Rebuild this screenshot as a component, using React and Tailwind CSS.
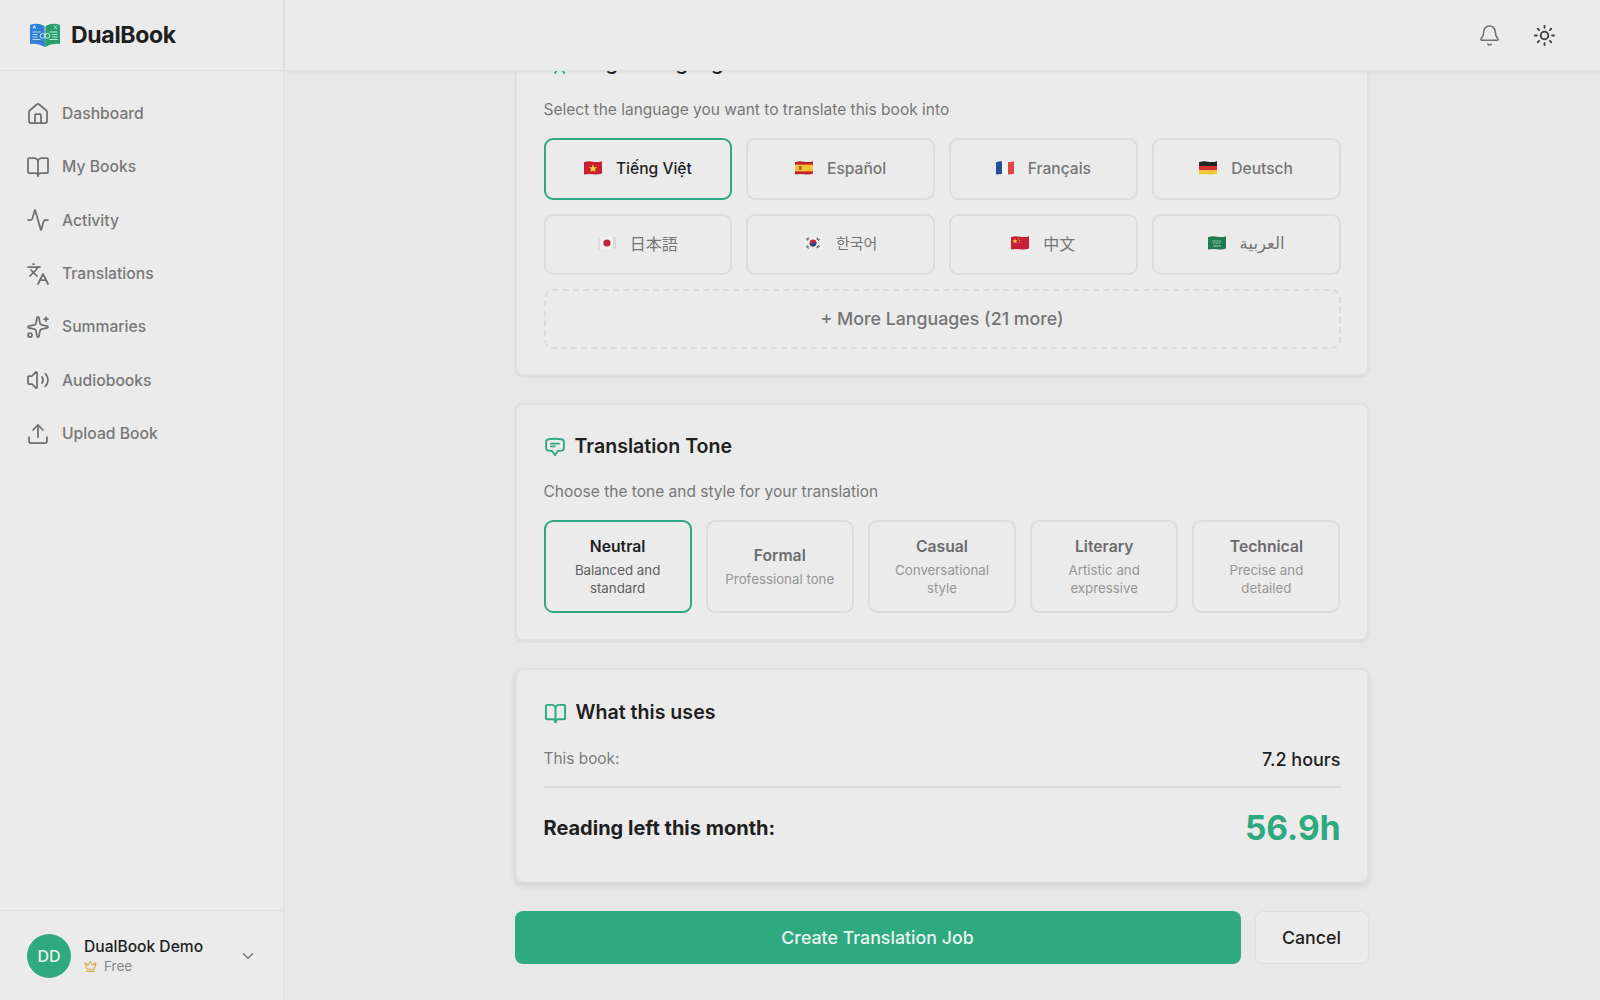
import React from "react";
import { House, BookOpen, Activity, Languages, Sparkles, Volume2, Upload, Bell, Sun, Crown, ChevronDown } from "lucide-react";
import { HiOutlineChatBubbleBottomCenterText } from "react-icons/hi2";

const Logo = () => (
  <svg width="32" height="26" viewBox="0 0 32 26" aria-hidden="true">
    <path d="M1 3 Q8 0 15.5 4 L16 25 Q8 20.5 1 22 Z" fill="#2f7fd4" />
    <path d="M31 3 Q24 0 16.5 4 L16 25 Q24 20.5 31 22 Z" fill="#27a06c" />
    <path d="M4 6.6 L5.3 3.4 L6.6 6.6 M4.6 5.5h1.4" fill="none" stroke="#fff" strokeWidth=".8" />
    <path d="M25 3.5 L28 7 M28 3.5 L25 7" fill="none" stroke="#d8f3e6" strokeWidth=".8" />
    <path d="M3.5 10h8M3.5 12.5h5M3.5 15h5M3.5 17.5h8" stroke="#bcd9f4" strokeWidth="1" />
    <path d="M20.5 10h8M23.5 12.5h5M23.5 15h5M20.5 17.5h8" stroke="#bdebd5" strokeWidth="1" />
    <circle cx="13.5" cy="13.8" r="2.4" fill="none" stroke="#dff0f7" strokeWidth=".9" />
    <circle cx="18.5" cy="13.8" r="2.4" fill="none" stroke="#dff7ea" strokeWidth=".9" />
  </svg>
);

const Flag = ({ id, children }) => (
  <svg width="18" height="14" viewBox="0 0 18 14" aria-hidden="true" className="mb-[2px] shrink-0">
    <defs>
      <clipPath id={id}>
        <path d="M0 1.2 Q4.5 -.2 9 .7 T18 .2 V12.6 Q13.5 14 9 13.2 T0 13.6 Z" />
      </clipPath>
    </defs>
    <g clipPath={`url(#${id})`}>{children}</g>
  </svg>
);

const flags = {
  vn: (
    <Flag id="vn">
      <rect width="18" height="14" fill="#c8202f" />
      <path d="M9 3.2 L10.1 6.2 L13.2 6.3 L10.8 8.2 L11.6 11 L9 9.4 L6.4 11 L7.2 8.2 L4.8 6.3 L7.9 6.2 Z" fill="#f7d33d" />
    </Flag>
  ),
  es: (
    <Flag id="es">
      <rect width="18" height="14" fill="#c4202c" />
      <rect y="3.6" width="18" height="6.8" fill="#f3c42f" />
      <rect x="4" y="5" width="2.6" height="3.8" fill="#b5552a" />
    </Flag>
  ),
  fr: (
    <Flag id="fr">
      <rect width="6" height="14" fill="#24509a" />
      <rect x="6" width="6" height="14" fill="#f4f4f4" />
      <rect x="12" width="6" height="14" fill="#de4a41" />
    </Flag>
  ),
  de: (
    <Flag id="de">
      <rect width="18" height="5" fill="#242424" />
      <rect y="5" width="18" height="4.4" fill="#d5302b" />
      <rect y="9.4" width="18" height="5" fill="#f5c92e" />
    </Flag>
  ),
  jp: (
    <Flag id="jp">
      <rect width="18" height="14" fill="#f1f1f1" />
      <rect x="15" width="3" height="14" fill="#d8d8d8" />
      <rect width="2" height="14" fill="#dcdcdc" />
      <circle cx="9" cy="7" r="3.6" fill="#c4203f" />
    </Flag>
  ),
  kr: (
    <Flag id="kr">
      <rect width="18" height="14" fill="#efefef" />
      <circle cx="9" cy="7" r="3.4" fill="#c8283c" />
      <path d="M5.6 7 A3.4 3.4 0 0 0 12.4 7 Q10.5 5.6 9 7 T5.6 7Z" fill="#25468f" />
      <path d="M2 3.5 L4.5 1.5 M2.8 4.5 L5.3 2.5 M13 1.8 L15.8 3.8 M12.4 2.8 L15.2 4.8 M2 10.5 L4.5 12.5 M2.8 9.5 L5.3 11.5 M13 12.2 L15.8 10.2 M12.4 11.2 L15.2 9.2" stroke="#2a2a2a" strokeWidth=".8" />
    </Flag>
  ),
  cn: (
    <Flag id="cn">
      <rect width="18" height="14" fill="#c9203a" />
      <path d="M4 2.4 L4.7 4.2 L6.6 4.3 L5.1 5.5 L5.6 7.3 L4 6.3 L2.4 7.3 L2.9 5.5 L1.4 4.3 L3.3 4.2 Z" fill="#f7d33d" />
      <circle cx="7.6" cy="2.8" r=".5" fill="#f7d33d" />
      <circle cx="8.6" cy="4.6" r=".5" fill="#f7d33d" />
      <circle cx="8.4" cy="6.6" r=".5" fill="#f7d33d" />
    </Flag>
  ),
  sa: (
    <Flag id="sa">
      <rect width="18" height="14" fill="#1f7a52" />
      <path d="M4.5 5h9M5 7h8" stroke="#cfe8da" strokeWidth=".9" strokeDasharray="1 .5" />
      <path d="M5 10h8" stroke="#e4f1ea" strokeWidth=".7" />
    </Flag>
  ),
};

const nav = [
  [House, "Dashboard"],
  [BookOpen, "My Books"],
  [Activity, "Activity"],
  [Languages, "Translations"],
  [Sparkles, "Summaries"],
  [Volume2, "Audiobooks"],
  [Upload, "Upload Book"],
];

const langs = [
  ["vn", "Tiếng Việt", ""],
  ["es", "Español", ""],
  ["fr", "Français", ""],
  ["de", "Deutsch", ""],
  ["jp", "日本語", "font-['Inter','Noto_Sans_CJK_JP',sans-serif] font-normal text-[16px]"],
  ["kr", "한국어", "font-['Inter','Noto_Sans_CJK_KR',sans-serif] font-normal text-[15px]"],
  ["cn", "中文", "font-['Inter','Noto_Sans_CJK_SC',sans-serif] font-normal text-[16px]"],
  ["sa", "العربية", "font-['DejaVu_Sans',sans-serif] font-normal text-[16.5px]"],
];

const tones = [
  ["Neutral", "Balanced and standard"],
  ["Formal", "Professional tone"],
  ["Casual", "Conversational style"],
  ["Literary", "Artistic and expressive"],
  ["Technical", "Precise and detailed"],
];

export default function App() {
  return (
    <div className="flex h-screen w-full overflow-hidden bg-[#e8e8e8] font-['Inter','Noto_Sans_CJK_SC','DejaVu_Sans',sans-serif] text-[#1f1f1f]">
      <aside className="flex w-[285px] shrink-0 flex-col border-r-2 border-[#e2e2e2] bg-[#ebebeb]">
        <div className="flex h-[71px] items-center gap-[10px] border-b border-[#dcdcdc] pl-[29px]">
          <Logo />
          <span className="text-[23px] font-bold tracking-[-0.3px] text-[#1f1f1f]">DualBook</span>
        </div>
        <nav className="flex flex-1 flex-col pt-[16px]">
          {nav.map(([Icon, label]) => (
            <div key={label} className="flex h-[53.33px] items-center gap-[12px] pl-[26px] text-[15.7px] font-medium text-[#787878]">
              <Icon size={24} strokeWidth={1.75} className="text-[#6f6f6f]" />
              <span>{label}</span>
            </div>
          ))}
        </nav>
        <div className="flex h-[90px] items-center border-t border-[#dcdcdc] pl-[27px] pr-[26px]">
          <div className="flex h-[44px] w-[44px] items-center justify-center rounded-full bg-[#2fa97f] text-[16px] font-medium text-[#e8f3ee]">DD</div>
          <div className="ml-[13px] flex-1 pt-[2px]">
            <div className="text-[15.6px] leading-[20px] font-medium text-[#1f1f1f]">DualBook Demo</div>
            <div className="flex items-center gap-[7px] text-[13.5px] leading-[19px] text-[#858585]">
              <Crown size={13} className="text-[#dca548]" />
              <span>Free</span>
            </div>
          </div>
          <ChevronDown size={18} strokeWidth={1.75} className="text-[#6f6f6f]" />
        </div>
      </aside>

      <main className="flex min-w-0 flex-1 flex-col">
        <header className="relative z-10 flex h-[71px] shrink-0 items-center justify-end gap-[32px] border-b border-[#dfdfdf] bg-[#ebebeb] pr-[44px] shadow-[0_1px_3px_rgba(0,0,0,0.06)]">
          <Bell size={23} strokeWidth={1.6} className="text-[#6f6f6f]" />
          <Sun size={23} strokeWidth={1.9} className="text-[#3d3d3d]" />
        </header>

        <div className="flex min-h-0 flex-1 flex-col items-center justify-end overflow-hidden pb-[36px] pr-[2px]">
          <div className="flex w-[854px] shrink-0 flex-col gap-[27px]">
            <section className="rounded-[8px] border-2 border-[#e0e0e0] bg-[#ebebeb] pl-[27px] pr-[26px] pb-[25px] pt-[26px] shadow-[0_1px_3px_rgba(0,0,0,0.08)]">
              <div className="mb-[20px] flex h-[28px] items-center gap-[10px]">
                <Languages size={22} strokeWidth={2} className="text-[#2fa97f]" />
                <h2 className="text-[19.6px] font-semibold text-[#1f1f1f]">Target Language</h2>
              </div>
              <p className="mb-[16px] text-[15.5px] leading-[24px] text-[#777777]">Select the language you want to translate this book into</p>
              <div className="grid grid-cols-4 gap-[14px]">
                {langs.map(([code, label, cls], i) => (
                  <button
                    key={code}
                    className={
                      i === 0
                        ? "flex h-[61.5px] items-center justify-center gap-[14px] rounded-[9px] border-2 border-[#2fa583] text-[15.6px] font-medium text-[#1f1f1f]"
                        : "flex h-[61.5px] items-center justify-center gap-[14px] rounded-[9px] border-2 border-[#dcdcdc] text-[15.6px] font-medium text-[#757575]"
                    }
                  >
                    {flags[code]}
                    <span className={cls}>{label}</span>
                  </button>
                ))}
                <button className="col-span-4 h-[60px] rounded-[9px] border-2 border-dashed border-[#dadada] text-[17.8px] font-medium text-[#757575]">
                  + More Languages (21 more)
                </button>
              </div>
            </section>

            <section className="rounded-[8px] border-2 border-[#e0e0e0] bg-[#ebebeb] pl-[27px] pr-[26px] pb-[26px] pt-[28px] shadow-[0_1px_3px_rgba(0,0,0,0.08)]">
              <div className="mb-[19px] flex h-[28px] items-center gap-[9px]">
                <HiOutlineChatBubbleBottomCenterText size={22} strokeWidth={2} className="text-[#2fa97f]" />
                <h2 className="text-[19.6px] font-semibold text-[#1f1f1f]">Translation Tone</h2>
              </div>
              <p className="mb-[16px] text-[15.5px] leading-[24px] text-[#777777]">Choose the tone and style for your translation</p>
              <div className="grid grid-cols-5 gap-[14px]">
                {tones.map(([name, sub], i) => (
                  <button
                    key={name}
                    className={
                      i === 0
                        ? "flex h-[93px] flex-col items-center justify-center gap-[4px] rounded-[9px] border-2 border-[#2fa583] px-[14px] text-center"
                        : "flex h-[93px] flex-col items-center justify-center gap-[4px] rounded-[9px] border-2 border-[#dcdcdc] px-[14px] text-center"
                    }
                  >
                    <span className={i === 0 ? "text-[15.7px] leading-[22px] font-semibold text-[#1f1f1f]" : "text-[15.7px] leading-[22px] font-semibold text-[#6b6b6b]"}>{name}</span>
                    <span className={i === 0 ? "text-[13.3px] leading-[17.7px] text-[#5e5e5e]" : "text-[13.3px] leading-[17.7px] text-[#969696]"}>{sub}</span>
                  </button>
                ))}
              </div>
            </section>

            <section className="rounded-[8px] border-2 border-[#e0e0e0] bg-[#ebebeb] pl-[27px] pr-[26px] pb-[25px] pt-[29px] shadow-[0_3px_6px_rgba(0,0,0,0.11)]">
              <div className="mb-[18px] flex h-[28px] items-center gap-[9px]">
                <BookOpen size={23} strokeWidth={2} className="text-[#2fa97f]" />
                <h2 className="text-[19.6px] font-semibold text-[#1f1f1f]">What this uses</h2>
              </div>
              <div className="flex h-[28px] items-center justify-between">
                <span className="text-[15.4px] text-[#7d7d7d]">This book:</span>
                <span className="text-[18px] font-medium text-[#1f1f1f]">7.2 hours</span>
              </div>
              <div className="mt-[13px] h-[2px] bg-[#dadada]" />
              <div className="mt-[12px] flex h-[56px] items-center justify-between">
                <span className="text-[20px] font-bold text-[#1f1f1f]">Reading left this month:</span>
                <span className="text-[33.5px] font-bold text-[#2fa97f]">56.9h</span>
              </div>
            </section>

            <div className="mt-[1px] flex gap-[14px]">
              <button className="h-[53px] flex-1 rounded-[8px] bg-[#2fa97f] pt-[1px] text-[17.8px] font-medium text-[#e9f5f0]">Create Translation Job</button>
              <button className="h-[53px] w-[114px] rounded-[8px] border border-[#dfdfdf] bg-[#ebebeb] pt-[1px] text-[17.8px] font-medium text-[#1f1f1f]">Cancel</button>
            </div>
          </div>
        </div>
      </main>
    </div>
  );
}
